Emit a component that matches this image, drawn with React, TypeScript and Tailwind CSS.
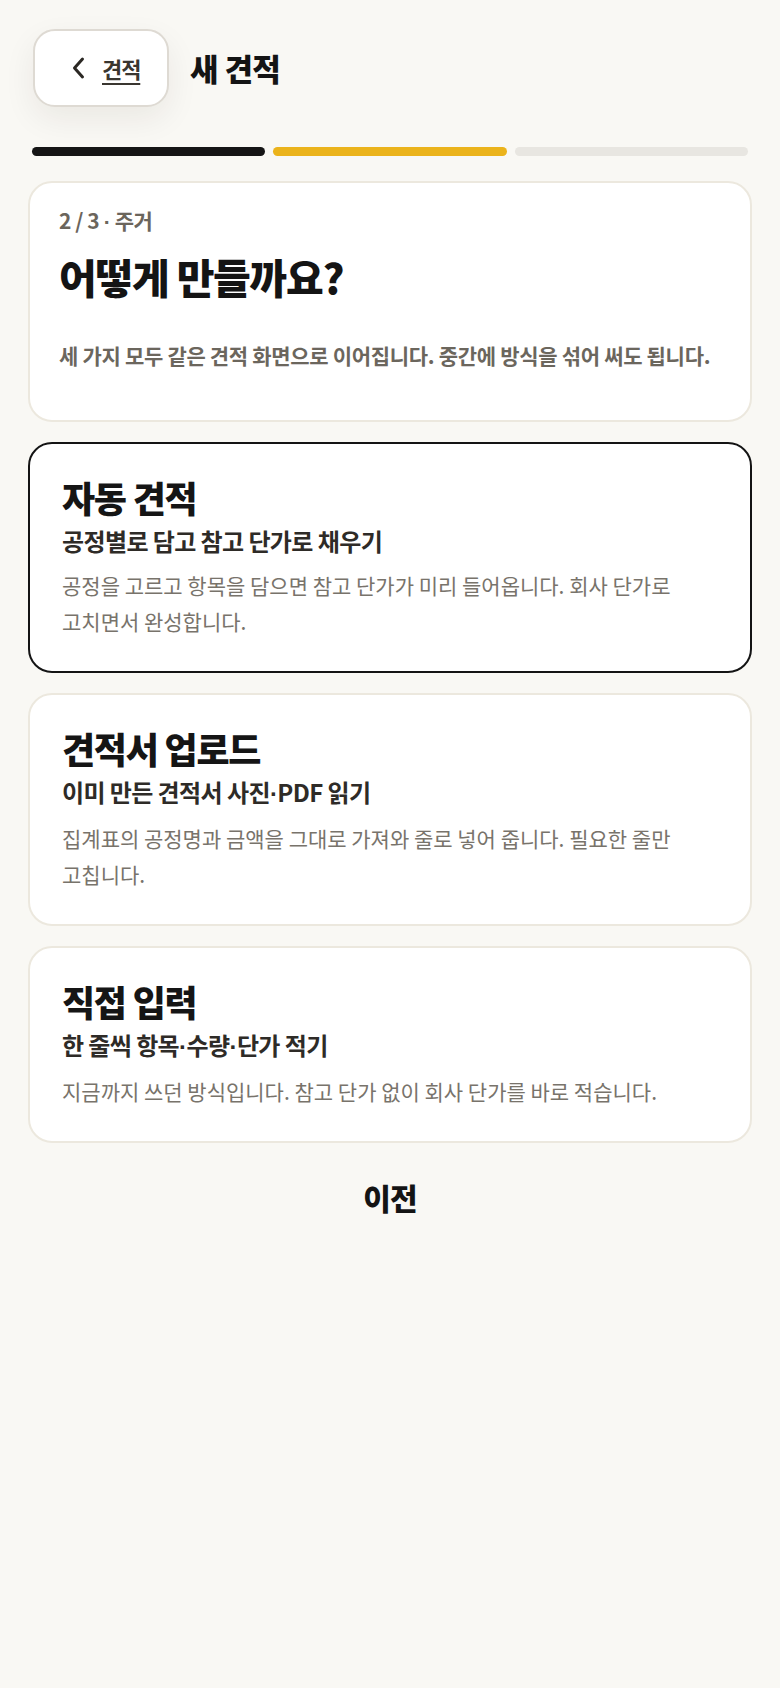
const font = {
  fontFamily: '"Noto Sans CJK KR", "Noto Sans", sans-serif',
};

type Method = {
  title: string;
  subtitle: string;
  body: string;
  selected?: boolean;
};

const METHODS: Method[] = [
  {
    title: "자동 견적",
    subtitle: "공정별로 담고 참고 단가로 채우기",
    body: "공정을 고르고 항목을 담으면 참고 단가가 미리 들어옵니다. 회사 단가로 고치면서 완성합니다.",
    selected: true,
  },
  {
    title: "견적서 업로드",
    subtitle: "이미 만든 견적서 사진·PDF 읽기",
    body: "집계표의 공정명과 금액을 그대로 가져와 줄로 넣어 줍니다. 필요한 줄만 고칩니다.",
  },
  {
    title: "직접 입력",
    subtitle: "한 줄씩 항목·수량·단가 적기",
    body: "지금까지 쓰던 방식입니다. 참고 단가 없이 회사 단가를 바로 적습니다.",
  },
];

// CJK fonts draw the middle dot full-width; use a latin face so it sits tight
function Dotted({ text }: { text: string }) {
  const parts = text.split("·");
  return (
    <>
      {parts.map((p, i) => (
        <span key={i}>
          {i > 0 && <span style={{ fontFamily: '"Liberation Sans", sans-serif' }}>·</span>}
          {p}
        </span>
      ))}
    </>
  );
}

function MethodCard({ title, subtitle, body, selected }: Method) {
  return (
    <button
      type="button"
      className={
        "block w-full rounded-[24px] border-2 bg-white px-[32px] pb-[32px] pt-[33px] text-left break-keep " +
        (selected ? "border-[#141414]" : "border-[#ece8de]")
      }
    >
      <h2 className="text-[36px] font-extrabold leading-[40px] tracking-[-0.035em] text-[#151515]">
        {title}
      </h2>
      <p className="mt-[9px] text-[24px] font-bold leading-[30px] tracking-[-0.025em] text-[#2e2b27]">
        <Dotted text={subtitle} />
      </p>
      <p className="mt-[11px] pr-[20px] text-[21px] font-normal leading-[36px] tracking-[0em] text-[#78736b]">
        {body}
      </p>
    </button>
  );
}

export default function App() {
  return (
    <div style={font} className="min-h-[1688px] w-full bg-[#f9f8f4] px-[28px] pt-[29px]">
      <header className="flex items-center gap-[21px] pl-[5px]">
        <button
          type="button"
          className="flex h-[78px] w-[136px] items-center gap-[17px] rounded-[22px] border-2 border-[#dedad3] bg-white pl-[37px] shadow-[0_12px_32px_rgba(40,30,10,0.07)]"
        >
          <svg width="13" height="24" viewBox="0 0 13 24" fill="none" aria-hidden>
            <polyline
              points="10.5,3 2.5,12 10.5,21"
              stroke="#2b2824"
              strokeWidth="3"
              strokeLinecap="round"
              strokeLinejoin="round"
            />
          </svg>
          <span className="text-[22px] font-bold tracking-[-0.05em] text-[#3a3630] underline decoration-2 underline-offset-[5px]">
            견적
          </span>
        </button>
        <h1 className="text-[31px] font-black tracking-[-0.02em] text-[#141414]">새 견적</h1>
      </header>

      <div className="mx-[4px] mt-[40px] grid grid-cols-3 gap-[8px]">
        <div className="h-[9px] rounded-full bg-[#151515]" />
        <div className="h-[9px] rounded-full bg-[#ebb31b]" />
        <div className="h-[9px] rounded-full bg-[#e8e6e1]" />
      </div>

      <section className="mt-[25px] rounded-[24px] border-2 border-[#ece8de] bg-white px-[29px] pb-[50px] pt-[23px] break-keep">
        <p className="text-[21px] font-bold leading-[28px] tracking-[-0.02em] text-[#6b655c]">
          2 / 3 <span style={{ fontFamily: '"Liberation Sans", sans-serif' }}>·</span> 주거
        </p>
        <h2 className="mt-[16px] text-[41px] font-black leading-[48px] tracking-[-0.03em] text-[#141414]">
          어떻게 만들까요?
        </h2>
        <p className="mt-[40px] text-[21px] font-bold leading-[30px] tracking-[-0.015em] text-[#6b665d]">
          세 가지 모두 같은 견적 화면으로 이어집니다. 중간에 방식을 섞어 써도 됩니다.
        </p>
      </section>

      <div className="mt-[20px] flex flex-col gap-[20px]">
        {METHODS.map((m) => (
          <MethodCard key={m.title} {...m} />
        ))}
      </div>

      <div className="mt-[36px] flex justify-center">
        <button
          type="button"
          className="text-[30px] font-extrabold leading-[36px] tracking-[-0.03em] text-[#141414]"
        >
          이전
        </button>
      </div>
    </div>
  );
}
